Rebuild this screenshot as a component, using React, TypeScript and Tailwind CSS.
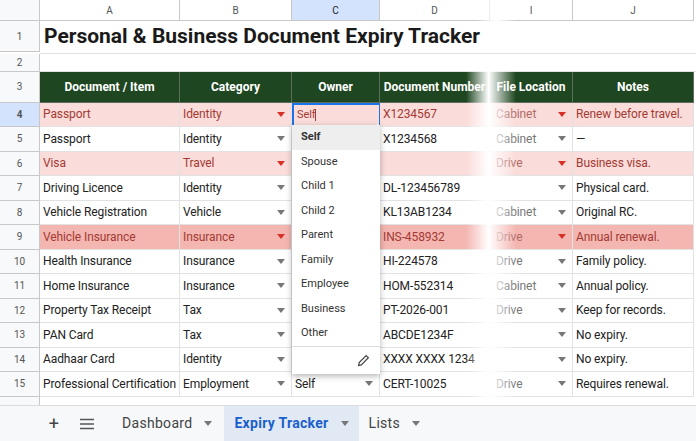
const cols = [
  { k: "A", w: 140 },
  { k: "B", w: 112 },
  { k: "C", w: 88 },
  { k: "D", w: 110 },
  { k: "I", w: 83 },
  { k: "J", w: 121 },
];

type Row = { n: number; a: string; b: string; c: string; d: string; i: string; j: string; hl?: "light" | "dark" };

const rows: Row[] = [
  { n: 4, a: "Passport", b: "Identity", c: "Self", d: "X1234567", i: "Cabinet", j: "Renew before travel.", hl: "light" },
  { n: 5, a: "Passport", b: "Identity", c: "", d: "X1234568", i: "Cabinet", j: "—" },
  { n: 6, a: "Visa", b: "Travel", c: "", d: "", i: "Drive", j: "Business visa.", hl: "light" },
  { n: 7, a: "Driving Licence", b: "Identity", c: "", d: "DL-123456789", i: "", j: "Physical card." },
  { n: 8, a: "Vehicle Registration", b: "Vehicle", c: "", d: "KL13AB1234", i: "Cabinet", j: "Original RC." },
  { n: 9, a: "Vehicle Insurance", b: "Insurance", c: "", d: "INS-458932", i: "Drive", j: "Annual renewal.", hl: "dark" },
  { n: 10, a: "Health Insurance", b: "Insurance", c: "", d: "HI-224578", i: "Drive", j: "Family policy." },
  { n: 11, a: "Home Insurance", b: "Insurance", c: "", d: "HOM-552314", i: "Cabinet", j: "Annual policy." },
  { n: 12, a: "Property Tax Receipt", b: "Tax", c: "", d: "PT-2026-001", i: "Drive", j: "Keep for records." },
  { n: 13, a: "PAN Card", b: "Tax", c: "", d: "ABCDE1234F", i: "", j: "No expiry." },
  { n: 14, a: "Aadhaar Card", b: "Identity", c: "", d: "XXXX XXXX 1234", i: "", j: "No expiry." },
  { n: 15, a: "Professional Certification", b: "Employment", c: "Self", d: "CERT-10025", i: "Drive", j: "Requires renewal." },
];

const options = ["Self", "Spouse", "Child 1", "Child 2", "Parent", "Family", "Employee", "Business", "Other"];

function Caret({ red }: { red?: boolean }) {
  return (
    <svg width="8" height="5" viewBox="0 0 8 5" className="shrink-0">
      <path d="M0 0h8L4 5z" fill={red ? "#d93025" : "#777"} />
    </svg>
  );
}

function RowHead({ n, h, active }: { n: string | number; h: string; active?: boolean }) {
  return (
    <div
      className={`w-[40px] shrink-0 flex items-center justify-center text-[10px] text-[#555] border-r border-b border-[#c8c8c8] ${h} ${active ? "bg-[#d3e3fd] font-bold text-[#222]" : "bg-[#f8f9fa]"}`}
    >
      {n}
    </div>
  );
}

export default function App() {
  return (
    <div className="w-[696px] h-[441px] overflow-hidden bg-white relative text-[#222]" style={{ fontFamily: "Roboto, 'Liberation Sans', sans-serif" }}>
      {/* column letters */}
      <div className="flex h-[21px]">
        <div className="w-[40px] shrink-0 bg-[#f8f9fa] border-r border-b border-[#c8c8c8]" />
        {cols.map((c) => (
          <div
            key={c.k}
            style={{ width: c.w }}
            className={`shrink-0 flex items-center justify-center text-[10px] border-r border-b border-[#c8c8c8] ${c.k === "C" ? "bg-[#d3e3fd] text-[#222]" : "bg-white text-[#555]"}`}
          >
            {c.k}
          </div>
        ))}
      </div>
      {/* title */}
      <div className="flex">
        <RowHead n={1} h="h-[31px]" />
        <div className="flex-1 border-b border-[#e2e2e2] flex items-center pl-[4px] text-[21px] font-bold text-[#1a1a1a] whitespace-nowrap">
          Personal &amp; Business Document Expiry Tracker
        </div>
      </div>
      <div className="flex">
        <RowHead n={2} h="h-[18px]" />
        <div className="flex-1 border-b border-[#e2e2e2]" />
      </div>
      {/* header */}
      <div className="flex">
        <RowHead n={3} h="h-[31px]" />
        {["Document / Item", "Category", "Owner", "Document Number", "File Location", "Notes"].map((t, i) => (
          <div
            key={t}
            style={{ width: cols[i].w }}
            className="shrink-0 h-[31px] bg-[#1e4620] text-white text-[12px] font-bold flex items-center justify-center border-r border-b border-[#5d6e5d] whitespace-nowrap overflow-hidden"
          >
            {t}
          </div>
        ))}
      </div>
      {rows.map((r) => {
        const bg = r.hl === "light" ? "bg-[#fadcda]" : r.hl === "dark" ? "bg-[#f4b6b1]" : "bg-white";
        const tc = r.hl ? "text-[#a33a33]" : "text-[#222]";
        const cell = `shrink-0 h-[24.5px] border-r border-b border-[#e2e2e2] px-[3px] flex items-center text-[12px] tracking-[-0.1px] whitespace-nowrap overflow-hidden ${bg} ${tc}`;
        return (
          <div key={r.n} className="flex">
            <RowHead n={r.n} h="h-[24.5px]" active={r.n === 4} />
            <div style={{ width: cols[0].w }} className={cell}>{r.a}</div>
            <div style={{ width: cols[1].w }} className={`${cell} justify-between pr-[6px]`}>
              {r.b}
              <Caret red={!!r.hl} />
            </div>
            {r.n === 4 ? (
              <div style={{ width: cols[2].w }} className={`${cell} border-2 !border-[#1a73e8] relative`}>
                <span className="text-[11px]">Self</span>
                <span className="w-[1px] h-[12px] bg-[#a33a33]" />
                <span className="absolute right-[-3px] bottom-[-3px] w-[5px] h-[5px] bg-[#1a73e8] border border-white" />
              </div>
            ) : (
              <div style={{ width: cols[2].w }} className={`${cell} justify-between pr-[6px]`}>
                {r.c}
                <Caret red={!!r.hl} />
              </div>
            )}
            <div style={{ width: cols[3].w }} className={cell}>{r.d}</div>
            <div style={{ width: cols[4].w }} className={`${cell} justify-between pr-[6px] pl-[6px]`}>
              <span className={r.hl ? "text-[#b06a65]" : "text-[#777]"}>{r.i}</span>
              <Caret red={!!r.hl} />
            </div>
            <div style={{ width: cols[5].w }} className={cell}>{r.j}</div>
          </div>
        );
      })}
      <div className="flex">
        <RowHead n="" h="h-[10px]" />
        <div className="flex-1 border-b border-[#e2e2e2]" />
      </div>

      {/* torn fade between D and I */}
      <div className="absolute top-[60px] left-[466px] w-[50px] h-[345px] bg-gradient-to-r from-transparent via-white via-45% to-white/0" />
      <div className="absolute top-0 left-[476px] w-[40px] h-[22px] bg-gradient-to-r from-white/0 via-white to-white/0" />

      {/* dropdown */}
      <div className="absolute left-[292px] top-[125px] w-[88px] bg-white shadow-[0_2px_6px_rgba(0,0,0,0.3)] text-[11px] text-[#333]">
        {options.map((o, i) => (
          <div key={o} className={`h-[24.5px] flex items-center pl-[9px] ${i === 0 ? "bg-[#eeeeee] font-bold" : ""}`}>
            {o}
          </div>
        ))}
        <div className="border-t border-[#ddd] h-[28px] flex items-center justify-end pr-[10px]">
          <svg width="13" height="13" viewBox="0 0 24 24" fill="none" stroke="#444" strokeWidth="2.2">
            <path d="M17 3l4 4L8 20l-5 1 1-5z" />
          </svg>
        </div>
      </div>

      {/* tab bar */}
      <div className="absolute left-0 right-0 bottom-0 h-[36px] bg-[#f6f8fa] border-t border-[#dadce0] flex items-center text-[14px] tracking-[0.3px] text-[#444]">
        <span className="w-[22px] ml-[43px] text-[18px] text-center">+</span>
        <svg className="ml-[15px]" width="14" height="12" viewBox="0 0 14 12">
          <path d="M0 1.5h14M0 6h14M0 10.5h14" stroke="#555" strokeWidth="1.5" />
        </svg>
        <div className="ml-[26px] flex items-center gap-[12px] px-[2px]">
          Dashboard <Caret />
        </div>
        <div className="ml-[10px] h-full flex items-center gap-[12px] px-[10px] bg-[#e1e9f5] text-[#1a5fcc] font-bold">
          Expiry Tracker <Caret />
        </div>
        <div className="ml-[10px] flex items-center gap-[12px]">
          Lists <Caret />
        </div>
      </div>
    </div>
  );
}
